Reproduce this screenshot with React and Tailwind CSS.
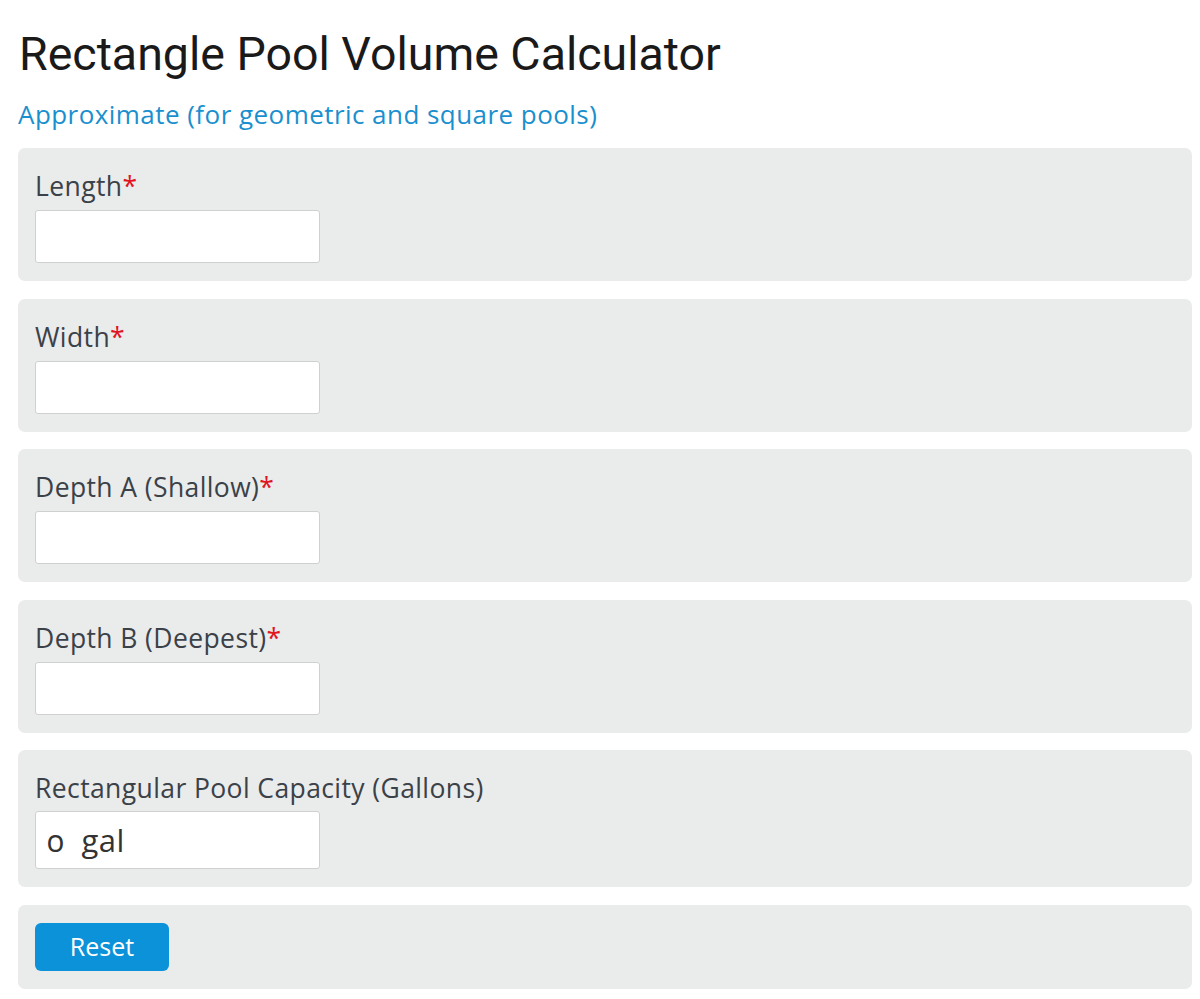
import React, { useState } from "react";

const fields = [
    { key: "length", label: "Length" },
    { key: "width", label: "Width" },
    { key: "depthA", label: "Depth A (Shallow)" },
    { key: "depthB", label: "Depth B (Deepest)" },
];

export default function App() {
    const [values, setValues] = useState({ length: "", width: "", depthA: "", depthB: "" });

    const l = parseFloat(values.length) || 0;
    const w = parseFloat(values.width) || 0;
    const a = parseFloat(values.depthA) || 0;
    const b = parseFloat(values.depthB) || 0;
    const gallons = Math.round(l * w * ((a + b) / 2) * 7.48);

    return (
        <div className="bg-white min-h-[999px] pl-[18px] pr-[8px] pt-[22px]" style={{ fontFamily: "'Open Sans', sans-serif" }}>
            <h1 className="text-[46.5px] leading-[64px] text-[#1a1a1a] pl-[1px]" style={{ fontFamily: "Roboto, sans-serif" }}>
                Rectangle Pool Volume Calculator
            </h1>
            <p className="text-[26px] leading-[36px] text-[#1a8fce] tracking-[0.45px] mt-[10px]">
                Approximate (for geometric and square pools)
            </p>

            <div className="mt-[16px] flex flex-col gap-[17.5px]">
                {fields.map((f) => (
                    <div key={f.key} className="bg-[#eaebeb] rounded-[7px] pl-[17px] pt-[20px] pb-[18px]">
                        <label className="block text-[26.5px] leading-[36px] text-[#3b4148] tracking-[0.4px]">
                            {f.label}
                            <span className="text-[#e0141e]">*</span>
                        </label>
                        <input
                            type="text"
                            value={values[f.key]}
                            onChange={(e) => setValues({ ...values, [f.key]: e.target.value })}
                            className="block mt-[6px] w-[285px] h-[53px] bg-white border border-[#cfd0d0] rounded-[3px] px-3 text-[26px] outline-none"
                        />
                    </div>
                ))}

                <div className="bg-[#eaebeb] rounded-[7px] pl-[17px] pt-[20px] pb-[18px]">
                    <label className="block text-[26.5px] leading-[36px] text-[#3b4148] tracking-[0.4px]">
                        Rectangular Pool Capacity (Gallons)
                    </label>
                    <div className="mt-[5px] w-[285px] h-[58px] bg-white border border-[#cfd0d0] rounded-[3px] pl-[11px] flex items-center text-[31px] text-[#333] tracking-[0.5px] oldstyle-nums">
                        {gallons}&nbsp;&nbsp;gal
                    </div>
                </div>

                <div className="bg-[#eaebeb] rounded-[7px] pl-[17px] pt-[18px] pb-[18px]">
                    <button
                        onClick={() => setValues({ length: "", width: "", depthA: "", depthB: "" })}
                        className="w-[134px] h-[48px] bg-[#0b92d8] rounded-[6px] text-white text-[25px]"
                    >
                        Reset
                    </button>
                </div>
            </div>
        </div>
    );
}
